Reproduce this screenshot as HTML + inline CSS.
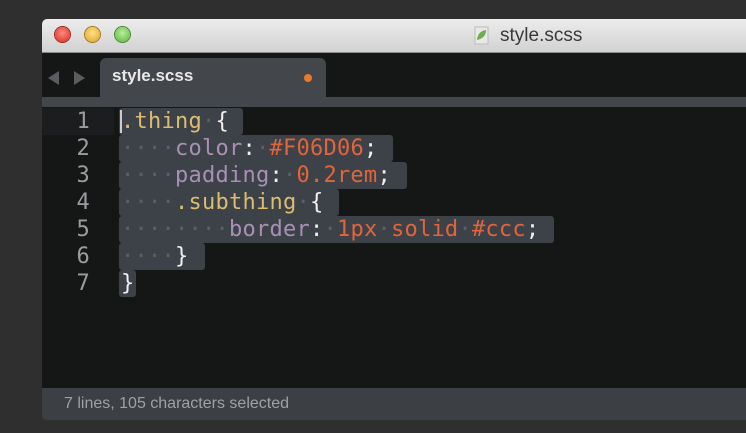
<!DOCTYPE html>
<html><head><style>
body{margin:0;width:746px;height:433px;background:#2f2f2f;overflow:hidden;position:relative;font-family:"Liberation Sans",sans-serif}
.win{position:absolute;left:42px;top:19px;width:720px;height:401px;background:#151616;border-radius:5px 0 0 4px;overflow:hidden}
.title{position:absolute;left:0;top:0;right:0;height:33px;background:linear-gradient(#ececec,#d2d2d2);border-bottom:1px solid #8a8a8a}
.tl{position:absolute;top:8px;width:15px;height:15px;border-radius:50%}
.ttext{position:absolute;left:458px;top:6px;font-size:19px;color:#3a3a3a}
.tabbar{position:absolute;left:0;top:34px;right:0;height:44px;background:#151616}
.tab{position:absolute;left:58px;top:39px;width:226px;height:40px;background:#43464b;border-radius:6px 6px 0 0}
.strip{position:absolute;left:0;top:78px;right:0;height:10px;background:#43464b}
.code{position:absolute;left:0;top:89px;right:0;font-family:"DejaVu Sans Mono","Liberation Mono",monospace;font-size:22px;letter-spacing:0.25px}
.ln{position:absolute;left:0;width:48px;text-align:right;color:#9a9da0;height:27px;line-height:27px}
.sel{position:absolute;background:#3d4148;border-radius:3px}
.row{position:absolute;left:79px;height:27px;line-height:27px;white-space:pre;color:#f0f0f0}
.d{color:#5c6066}.s{color:#dbbd72}.p{color:#a890b5}.v{color:#e1653a}
.status{position:absolute;left:0;right:0;top:369px;height:32px;background:#3c3f44;color:#9ea1a5;font-size:16px;line-height:32px;padding-left:22px}
</style></head><body>
<div class="win">
<div class="title">
<div class="tl" style="left:13px;background:radial-gradient(circle at 50% 40%,#ff8a80,#d8271e);box-shadow:0 0 0 1px #9a2a22"></div>
<div class="tl" style="left:43px;background:radial-gradient(circle at 50% 40%,#ffe08a,#e0a020);box-shadow:0 0 0 1px #a07a22"></div>
<div class="tl" style="left:73px;background:radial-gradient(circle at 50% 40%,#b8f09a,#5cb03a);box-shadow:0 0 0 1px #4a8a30"></div>
<svg style="position:absolute;left:432px;top:7px" width="16" height="20"><rect x="1" y="1" width="13" height="17" fill="#e8e8e8" stroke="#bbb"/><path d="M3 14 Q4 5 12 4 Q12 12 3 14Z" fill="#6cae4a"/></svg>
<div class="ttext">style.scss</div>
</div>
<div class="tabbar"><div style="position:absolute;left:6px;top:18px;width:0;height:0;border:7px solid transparent;border-right:11px solid #5a5c5f;border-left:0"></div><div style="position:absolute;left:32px;top:18px;width:0;height:0;border:7px solid transparent;border-left:11px solid #5a5c5f;border-right:0"></div></div>
<div class="tab"><span style="position:absolute;left:12px;top:8px;color:#e8e8e8;font-size:17px;font-weight:bold">style.scss</span><span style="position:absolute;left:204px;top:16px;width:8px;height:8px;border-radius:50%;background:#e87a2a"></span></div>
<div class="strip"></div>
<div style="position:absolute;left:0;top:89px;width:72px;height:27px;background:#1c1d1e"></div>
<div class="code">
<div class="sel" style="left:77px;top:0;width:124px;height:27px"></div>
<div class="sel" style="left:77px;top:27px;width:274px;height:27px"></div>
<div class="sel" style="left:77px;top:54px;width:288px;height:27px"></div>
<div class="sel" style="left:77px;top:81px;width:220px;height:27px"></div>
<div class="sel" style="left:77px;top:108px;width:435px;height:27px"></div>
<div class="sel" style="left:77px;top:135px;width:86px;height:27px"></div>
<div class="sel" style="left:77px;top:162px;width:17px;height:27px"></div>
<div style="position:absolute;left:78px;top:2px;width:2px;height:23px;background:#ccc"></div>
<div class="ln" style="top:0">1</div><div class="ln" style="top:27px">2</div><div class="ln" style="top:54px">3</div><div class="ln" style="top:81px">4</div><div class="ln" style="top:108px">5</div><div class="ln" style="top:135px">6</div><div class="ln" style="top:162px">7</div>
<div class="row" style="top:0"><span class="s">.thing</span><span class="d">·</span>{</div>
<div class="row" style="top:27px"><span class="d">····</span><span class="p">color</span>:<span class="d">·</span><span class="v">#F06D06</span>;</div>
<div class="row" style="top:54px"><span class="d">····</span><span class="p">padding</span>:<span class="d">·</span><span class="v">0.2rem</span>;</div>
<div class="row" style="top:81px"><span class="d">····</span><span class="s">.subthing</span><span class="d">·</span>{</div>
<div class="row" style="top:108px"><span class="d">········</span><span class="p">border</span>:<span class="d">·</span><span class="v">1px</span><span class="d">·</span><span class="v">solid</span><span class="d">·</span><span class="v">#ccc</span>;</div>
<div class="row" style="top:135px"><span class="d">····</span>}</div>
<div class="row" style="top:162px">}</div>
</div>
<div class="status">7 lines, 105 characters selected</div>
</div>
</body></html>
